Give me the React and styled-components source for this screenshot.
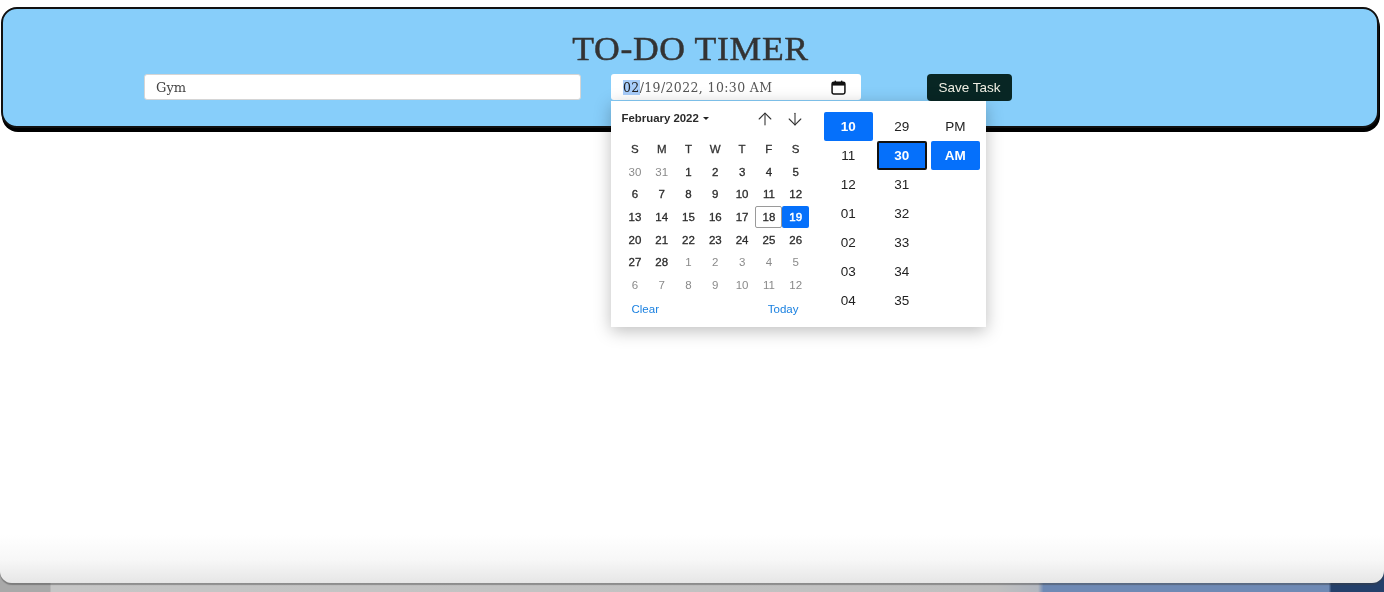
import styled, { createGlobalStyle } from "styled-components";
import { ArrowUp, ArrowDown } from "lucide-react";

const GlobalStyle = createGlobalStyle`
  html, body {
    margin: 0;
    padding: 0;
    background: #fff;
  }
  body {
    font-family: "Liberation Sans", Arial, sans-serif;
    overflow: hidden;
  }
`;

const WEEKDAYS = ["S", "M", "T", "W", "T", "F", "S"];
const DAYS = [
  30, 31, 1, 2, 3, 4, 5,
  6, 7, 8, 9, 10, 11, 12,
  13, 14, 15, 16, 17, 18, 19,
  20, 21, 22, 23, 24, 25, 26,
  27, 28, 1, 2, 3, 4, 5,
  6, 7, 8, 9, 10, 11, 12,
];
const HOURS = ["10", "11", "12", "01", "02", "03", "04"];
const MINUTES = ["29", "30", "31", "32", "33", "34", "35"];

const Page = styled.div`
  height: 592px;
  display: flex;
  flex-direction: column;
  overflow: hidden;
  filter: blur(0.45px);
  background: linear-gradient(
    90deg,
    #a9a9a9 0,
    #a9a9a9 3.6%,
    #c6c6c6 3.7%,
    #c0c0c0 72%,
    #b4b8c0 75%,
    #6f8ab5 75.4%,
    #6f8ab5 96%,
    #24406b 96.2%,
    #24406b 100%
  );
`;

const Screen = styled.main`
  height: 583px;
  padding: 7px 5px 0 1px;
  box-sizing: border-box;
  border-radius: 0 0 12px 12px;
  background: linear-gradient(180deg, #fff 0, #fff 535px, #f7f7f7 560px, #e6e6e6 583px);
  box-shadow: 0 2px 1px rgba(60, 60, 60, 0.4);
`;

const Header = styled.header`
  height: 121px;
  box-sizing: border-box;
  padding-top: 21px;
  border: 2px solid #111;
  border-radius: 16px;
  background: #87cefa;
  box-shadow: 1px 4px 0 #000;
  display: flex;
  flex-direction: column;
  align-items: center;
`;

const Title = styled.h1`
  margin: 0 0 6px;
  height: 38px;
  font: 400 33px/38px "Liberation Serif", Georgia, serif;
  letter-spacing: 0.6px;
  transform: scaleX(1.08);
  -webkit-text-stroke: 0.45px #333;
  color: #333;
`;

const Form = styled.form`
  width: 1092px;
  display: flex;
  align-items: flex-start;
`;

const TextInput = styled.input`
  width: 437px;
  height: 26px;
  box-sizing: border-box;
  margin-right: 30px;
  padding: 0 11px;
  border: 1px solid #d5d5d5;
  border-radius: 3px;
  background: #fff;
  font: 400 13px "DejaVu Serif", Georgia, serif;
  color: #444;
  outline: none;
`;

const DateField = styled.div`
  position: relative;
  width: 250px;
  height: 26px;
  box-sizing: border-box;
  margin-right: 66px;
  padding: 0 15px 0 12px;
  border-radius: 3px;
  background: #fff;
  display: flex;
  align-items: center;
  justify-content: space-between;
  font: 400 12.5px "DejaVu Serif", Georgia, serif;
  letter-spacing: 0.38px;
  color: #555;
`;

const DateText = styled.span`
  white-space: nowrap;
`;

const Selected = styled.span`
  background: #a8cdfa;
  color: #222;
`;

const SaveButton = styled.button`
  width: 85px;
  height: 27px;
  padding: 0;
  border: 0;
  border-radius: 4px;
  background: #082624;
  color: #f0efe4;
  font: 400 13.5px "Liberation Sans", Arial, sans-serif;
`;

const Picker = styled.div`
  position: absolute;
  top: 27px;
  left: 0;
  width: 375px;
  height: 226px;
  box-sizing: border-box;
  padding: 0 6px 0 0;
  background: #fff;
  box-shadow: 0 4px 16px rgba(0, 0, 0, 0.26);
  display: flex;
  letter-spacing: 0;
  color: #222;
  font-family: "Liberation Sans", Arial, sans-serif;
`;

const Calendar = styled.section`
  width: 212px;
  box-sizing: border-box;
  padding: 5px 0 0 10.5px;
`;

const CalendarTop = styled.div`
  height: 24px;
  display: flex;
  align-items: center;
`;

const MonthLabel = styled.span`
  width: 133.5px;
  display: flex;
  align-items: center;
  gap: 4px;
  font-size: 11.4px;
  font-weight: 700;
  color: #2a2a2a;
`;

const Caret = styled.span`
  width: 0;
  height: 0;
  border-left: 3.5px solid transparent;
  border-right: 3.5px solid transparent;
  border-top: 3.5px solid #222;
`;

const ArrowGroup = styled.div`
  display: flex;
  gap: 10px;
  margin-top: 1px;
  color: #333;
`;

const DayGrid = styled.div`
  margin-top: 7.5px;
  display: grid;
  grid-template-columns: repeat(7, 26.8px);
  grid-auto-rows: 22.7px;
`;

const Weekday = styled.span`
  display: flex;
  align-items: center;
  justify-content: center;
  font-size: 11.5px;
  -webkit-text-stroke: 0.3px #333;
  color: #333;
`;

const Day = styled.span`
  display: flex;
  align-items: center;
  justify-content: center;
  box-sizing: border-box;
  border-radius: 2px;
  font-size: 11.5px;
  -webkit-text-stroke: ${({ $muted, $active }) => ($active ? "0.5px #fff" : $muted ? "0" : "0.3px #2b2b2b")};
  color: ${({ $muted, $active }) => ($active ? "#fff" : $muted ? "#8a8a8a" : "#2b2b2b")};
  background: ${({ $active }) => ($active ? "#0570fb" : "transparent")};
  border: ${({ $today }) => ($today ? "1px solid #9a9a9a" : "0")};
`;

const CalendarFooter = styled.div`
  width: 187px;
  box-sizing: border-box;
  margin-top: 7px;
  padding: 0 10px;
  display: flex;
  justify-content: space-between;
  font-size: 11.5px;
  color: #1a80e0;
`;

const TimeColumns = styled.section`
  flex: 1;
  padding: 11px 0 0 1px;
  display: grid;
  grid-template-columns: repeat(3, 49.5px);
  column-gap: 4px;
  align-content: start;
`;

const TimeColumn = styled.div`
  display: flex;
  flex-direction: column;
`;

const TimeCell = styled.span`
  height: 29px;
  box-sizing: border-box;
  display: flex;
  align-items: center;
  justify-content: center;
  border-radius: 2px;
  font-size: 13.5px;
  font-weight: ${({ $active }) => ($active ? 700 : 400)};
  color: ${({ $active }) => ($active ? "#fff" : "#222")};
  background: ${({ $active }) => ($active ? "#0570fb" : "transparent")};
  border: ${({ $focus }) => ($focus ? "2px solid #111" : "0")};
`;

function CalendarIcon() {
  return (
    <svg width="15" height="15" viewBox="0 0 14 14" fill="none">
      <rect x="1" y="2" width="12" height="11" rx="1.6" stroke="#111" strokeWidth="1.4" />
      <rect x="1" y="2" width="12" height="3.2" fill="#111" />
      <rect x="3.4" y="0.6" width="1.3" height="2" fill="#111" />
      <rect x="9.3" y="0.6" width="1.3" height="2" fill="#111" />
    </svg>
  );
}

export default function App() {
  const firstTrailing = 30;
  return (
    <Page>
      <GlobalStyle />
      <Screen>
        <Header>
          <Title>TO-DO TIMER</Title>
          <Form onSubmit={(e) => e.preventDefault()}>
            <TextInput defaultValue="Gym" />
            <DateField>
              <DateText>
                <Selected>02</Selected>/19/2022, 10:30 AM
              </DateText>
              <CalendarIcon />
              <Picker>
                <Calendar>
                  <CalendarTop>
                    <MonthLabel>
                      February 2022 <Caret />
                    </MonthLabel>
                    <ArrowGroup>
                      <ArrowUp size={20} strokeWidth={1.3} />
                      <ArrowDown size={20} strokeWidth={1.3} />
                    </ArrowGroup>
                  </CalendarTop>
                  <DayGrid>
                    {WEEKDAYS.map((d, i) => (
                      <Weekday key={i}>{d}</Weekday>
                    ))}
                    {DAYS.map((d, i) => (
                      <Day
                        key={i}
                        $muted={i < 2 || i >= firstTrailing}
                        $today={i === 19}
                        $active={i === 20}
                      >
                        {d}
                      </Day>
                    ))}
                  </DayGrid>
                  <CalendarFooter>
                    <span>Clear</span>
                    <span>Today</span>
                  </CalendarFooter>
                </Calendar>
                <TimeColumns>
                  <TimeColumn>
                    {HOURS.map((h) => (
                      <TimeCell key={h} $active={h === "10"}>{h}</TimeCell>
                    ))}
                  </TimeColumn>
                  <TimeColumn>
                    {MINUTES.map((m) => (
                      <TimeCell key={m} $active={m === "30"} $focus={m === "30"}>{m}</TimeCell>
                    ))}
                  </TimeColumn>
                  <TimeColumn>
                    <TimeCell>PM</TimeCell>
                    <TimeCell $active>AM</TimeCell>
                  </TimeColumn>
                </TimeColumns>
              </Picker>
            </DateField>
            <SaveButton type="button">Save Task</SaveButton>
          </Form>
        </Header>
      </Screen>
    </Page>
  );
}
